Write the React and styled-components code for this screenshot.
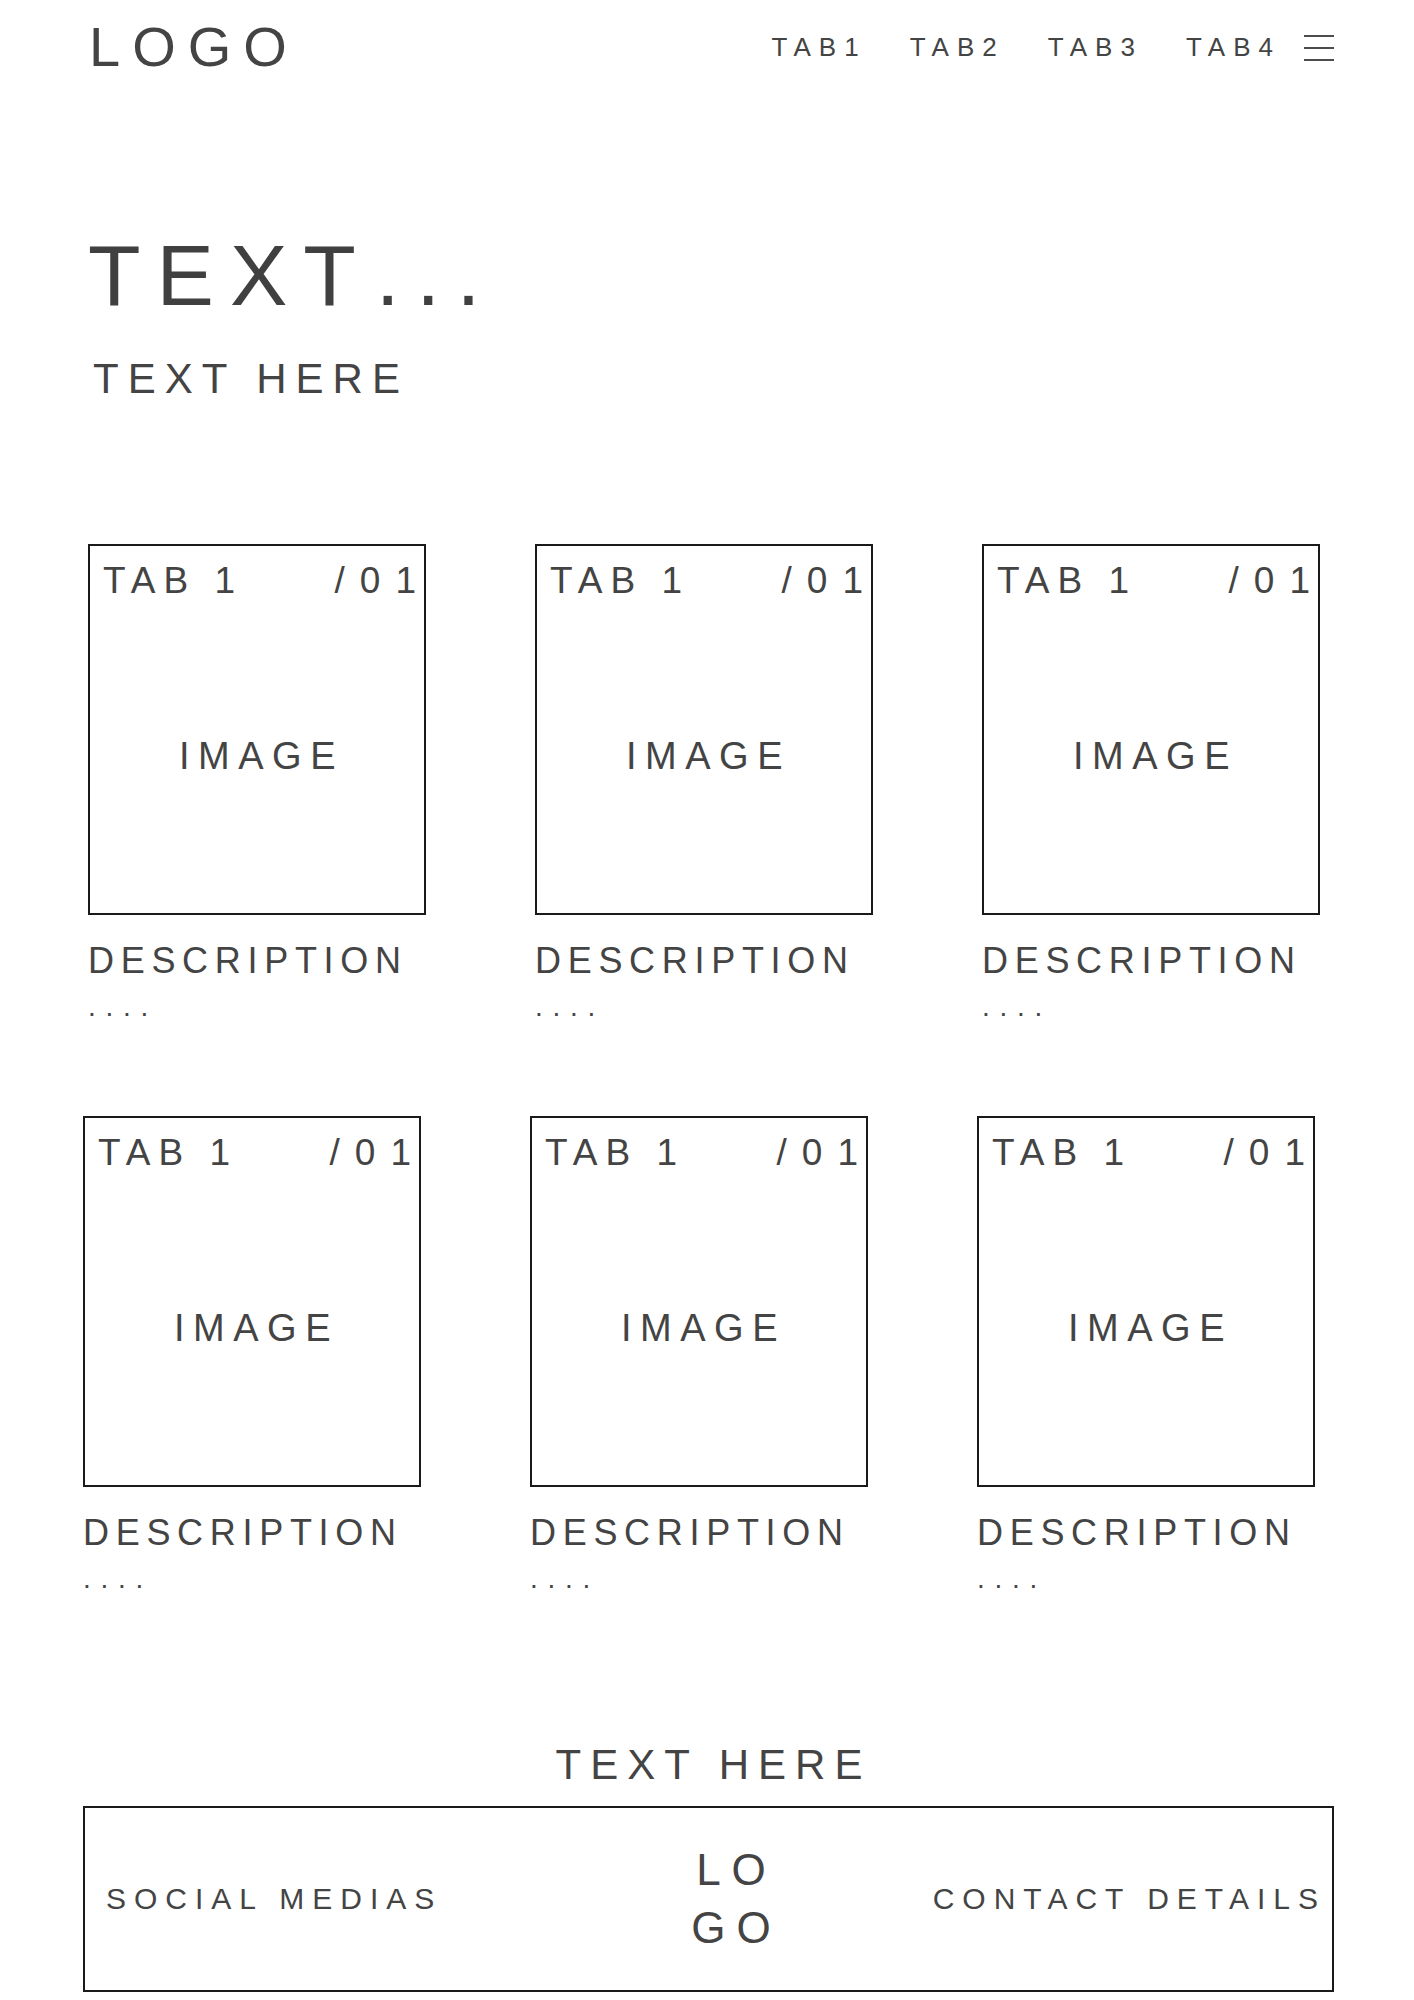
import React from 'react';
import styled, { createGlobalStyle } from 'styled-components';

const GlobalStyle = createGlobalStyle`
  html, body {
    margin: 0;
    padding: 0;
    background: #fff;
  }
  body {
    font-family: 'Liberation Sans', Arial, sans-serif;
    color: #444;
  }
  * {
    box-sizing: border-box;
  }
`;

const Page = styled.div`
  width: 1414px;
  padding: 0 80px 8px 88px;
`;

const Header = styled.header`
  height: 94px;
  display: flex;
  align-items: center;
  justify-content: space-between;
`;

const Logo = styled.div`
  margin-left: 1px;
  font-size: 56px;
  line-height: 1;
  letter-spacing: 12px;
`;

const Nav = styled.nav`
  display: flex;
  align-items: center;
  gap: 43px;
`;

const NavTab = styled.a`
  font-size: 26px;
  line-height: 1;
  letter-spacing: 8px;
  color: #444;
  text-decoration: none;
`;

const Burger = styled.button`
  display: flex;
  margin: 2px 0 0 -20px;
  padding: 0;
  border: 0;
  background: none;
  cursor: pointer;
`;

const HeroTitle = styled.h1`
  margin: 138px 0 0;
  font-size: 86px;
  font-weight: 400;
  line-height: 1;
  letter-spacing: 16px;
  color: #404040;
`;

const Ellipsis = styled.span`
  margin-left: 4px;
  letter-spacing: 16.5px;
`;

const Heading = styled.h2`
  margin: ${p => p.top}px 0 0 ${p => p.indent || 0}px;
  padding-left: ${p => (p.center ? 5 : 0)}px;
  font-size: 42px;
  font-weight: 400;
  line-height: 1;
  letter-spacing: 9px;
  text-align: ${p => (p.center ? 'center' : 'left')};
`;

const CardGrid = styled.section`
  margin-top: 144px;
  display: flex;
  flex-direction: column;
  gap: 95px;
`;

const CardRow = styled.div`
  display: flex;
  gap: 109px;
  margin-left: ${p => p.shift || 0}px;
`;

const CardItem = styled.article`
  width: 338px;
`;

const Frame = styled.div`
  height: 371px;
  border: 2px solid #1a1a1a;
  display: flex;
  flex-direction: column;
`;

const FrameHead = styled.div`
  display: flex;
  justify-content: space-between;
  padding: 16px 0 0 13px;
  font-size: 37px;
  line-height: 1;
  letter-spacing: 8px;
`;

const FrameIndex = styled.span`
  margin-right: -7px;
  letter-spacing: 15px;
`;

const FrameBody = styled.div`
  flex: 1;
  display: flex;
  align-items: center;
  justify-content: center;
  padding-left: 9px;
  font-size: 38px;
  line-height: 1;
  letter-spacing: 8.5px;
`;

const Description = styled.div`
  margin-top: 28px;
  font-size: 36px;
  line-height: 1;
  letter-spacing: 6.7px;
`;

const Dots = styled.div`
  margin-top: 14px;
  font-size: 28px;
  line-height: 1;
  letter-spacing: 9.7px;
`;

const Footer = styled.footer`
  margin: 19.5px 0 0 -5px;
  height: 186px;
  border: 2px solid #1a1a1a;
  display: grid;
  grid-template-columns: 530px 190px 1fr;
  align-items: center;
  padding: 0 6px 0 21px;
`;

const FooterText = styled.div`
  font-size: 30px;
  line-height: 1;
  letter-spacing: 8px;
  justify-self: ${p => (p.end ? 'end' : 'start')};
`;

const FooterLogo = styled.div`
  padding-left: 11px;
  font-size: 44px;
  line-height: 58px;
  letter-spacing: 11px;
  text-align: center;
`;

const tabs = ['TAB1', 'TAB2', 'TAB3', 'TAB4'];

const rows = [
  { shift: 0, cards: [1, 2, 3] },
  { shift: -5, cards: [4, 5, 6] },
];

const MenuIcon = () => (
  <svg width="30" height="26" viewBox="0 0 30 26" fill="none">
    <line x1="0" y1="1" x2="30" y2="1" stroke="#111" strokeWidth="1.5" />
    <line x1="0" y1="13" x2="30" y2="13" stroke="#111" strokeWidth="1.5" />
    <line x1="0" y1="25" x2="30" y2="25" stroke="#111" strokeWidth="1.5" />
  </svg>
);

const Card = ({ tab, index }) => (
  <CardItem>
    <Frame>
      <FrameHead>
        <span>{tab}</span>
        <FrameIndex>{index}</FrameIndex>
      </FrameHead>
      <FrameBody>IMAGE</FrameBody>
    </Frame>
    <Description>DESCRIPTION</Description>
    <Dots>....</Dots>
  </CardItem>
);

const App = () => (
  <Page>
    <GlobalStyle />
    <Header>
      <Logo>LOGO</Logo>
      <Nav>
        {tabs.map(t => (
          <NavTab key={t} href="#">
            {t}
          </NavTab>
        ))}
        <Burger aria-label="menu">
          <MenuIcon />
        </Burger>
      </Nav>
    </Header>

    <HeroTitle>
      TEXT<Ellipsis>...</Ellipsis>
    </HeroTitle>
    <Heading top={40} indent={5}>
      TEXT HERE
    </Heading>

    <CardGrid>
      {rows.map((row, i) => (
        <CardRow key={i} shift={row.shift}>
          {row.cards.map(id => (
            <Card key={id} tab="TAB 1" index="/01" />
          ))}
        </CardRow>
      ))}
    </CardGrid>

    <Heading top={151} center>
      TEXT HERE
    </Heading>
    <Footer>
      <FooterText>SOCIAL MEDIAS</FooterText>
      <FooterLogo>
        LO
        <br />
        GO
      </FooterLogo>
      <FooterText end>CONTACT DETAILS</FooterText>
    </Footer>
  </Page>
);

export default App;
